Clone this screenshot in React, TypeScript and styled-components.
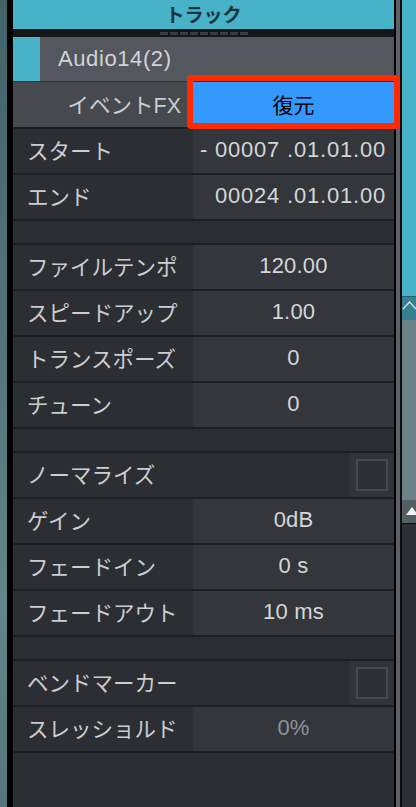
import React from "react";
import styled, { createGlobalStyle } from "styled-components";

// COLOURS

const C = {
  teal: "#48b2c8",
  labelBg: "#2b2e32",
  valueBg: "#33363a",
  divider: "#1c1e21",
  text: "#cbcdd0",
  value: "#d4d6d8",
  dim: "#8d949b",
};

const GlobalStyle = createGlobalStyle`
  html, body {
    margin: 0;
    padding: 0;
    background: ${C.labelBg};
  }
  body {
    font-family: "Liberation Sans", "Noto Sans CJK JP", sans-serif;
    -webkit-font-smoothing: antialiased;
  }
`;

// LAYOUT

const Page = styled.div`
  display: flex;
  height: 807px;
  overflow: hidden;
`;

const LeftEdge = styled.div`
  width: 7px;
  flex: 0 0 7px;
  background: linear-gradient(180deg, #42636a 0%, #557579 45%, #62868a 75%, #557579 100%);
`;

const Panel = styled.div`
  width: 381px;
  flex: 0 0 381px;
  border-left: 6px solid #000;
  border-right: 2px solid #000;
  background: ${C.labelBg};
  display: flex;
  flex-direction: column;
`;

const Gutter = styled.div`
  width: 4px;
  flex: 0 0 4px;
  background: #5b6166;
  border-right: 2px solid #0c0d0e;
`;

const RightStrip = styled.div`
  flex: 1;
  display: flex;
  flex-direction: column;
  background: #2c3034;
`;

const StripPart = styled.div<{ $h: number; $bg: string }>`
  height: ${(p) => p.$h}px;
  flex: 0 0 ${(p) => p.$h}px;
  background: ${(p) => p.$bg};
  overflow: hidden;
`;

// HEADER SECTION

const Header = styled.div`
  height: 29px;
  padding-bottom: 3px;
  box-sizing: border-box;
  background: ${C.teal};
  display: flex;
  align-items: center;
  justify-content: center;
  font-size: 19px;
  font-weight: bold;
  color: #17343e;
`;

const Grip = styled.div`
  height: 8px;
  background: #141618;
  display: flex;
  justify-content: center;
  align-items: center;
  gap: 2px;
`;

const GripDash = styled.span`
  width: 8px;
  height: 3px;
  background: #3a3e44;
`;

const NameRow = styled.div`
  height: 44px;
  display: flex;
  background: #54575d;
  border-bottom: 1px solid #2e3135;
`;

const ColorChip = styled.div`
  width: 27px;
  background: ${C.teal};
`;

const TrackName = styled.div`
  display: flex;
  align-items: center;
  padding-left: 18px;
  font-size: 22px;
  letter-spacing: 0.6px;
  color: #d2d4d6;
`;

const FxRow = styled.div`
  height: 45px;
  display: flex;
  background: #46494e;
`;

const FxLabel = styled.div`
  width: 180px;
  padding: 0 12px 3px 0;
  box-sizing: border-box;
  display: flex;
  align-items: center;
  justify-content: flex-end;
  font-size: 21.5px;
  color: ${C.text};
`;

const RestoreButton = styled.div`
  position: relative;
  flex: 1;
  padding-bottom: 2px;
  background: #3399ff;
  display: flex;
  align-items: center;
  justify-content: center;
  font-size: 21px;
  color: #000;
`;

const Highlight = styled.div`
  position: absolute;
  top: -7px;
  left: -6px;
  right: -6px;
  bottom: -2px;
  border: 6px solid #ff2a00;
  border-radius: 4px;
  z-index: 2;
  pointer-events: none;
`;

// LIST SECTION

const List = styled.div`
  display: flex;
  flex-direction: column;
  gap: 2px;
  padding: 2px 0;
  background: ${C.divider};
`;

const Row = styled.div`
  height: 44px;
  display: flex;
  background: ${C.labelBg};
`;

const Spacer = styled.div`
  height: 22px;
  background: ${C.labelBg};
`;

const Label = styled.div<{ $wide?: boolean }>`
  flex: ${(p) => (p.$wide ? "1" : "0 0 180px")};
  padding: 0 0 4px 14px;
  box-sizing: border-box;
  display: flex;
  align-items: center;
  font-size: 21.5px;
  color: ${C.text};
  white-space: nowrap;
`;

const Value = styled.div<{ $right?: boolean; $dim?: boolean }>`
  flex: 1;
  background: ${C.valueBg};
  display: flex;
  align-items: center;
  justify-content: ${(p) => (p.$right ? "flex-end" : "center")};
  padding-right: ${(p) => (p.$right ? "8px" : "0")};
  padding-bottom: 2px;
  font-size: 22px;
  letter-spacing: ${(p) => (p.$right ? "0.8px" : "0.2px")};
  color: ${(p) => (p.$dim ? C.dim : C.value)};
  white-space: nowrap;
`;

const CheckCell = styled.div`
  width: 44px;
  background: #303337;
  display: flex;
  align-items: center;
  justify-content: center;
`;

const CheckBox = styled.div`
  width: 28px;
  height: 28px;
  border: 2px solid #46494e;
  background: #2c2f33;
`;

type Item =
  | { kind: "spacer" }
  | { kind: "value"; label: string; value: string; right?: boolean; dim?: boolean }
  | { kind: "check"; label: string };

const items: Item[] = [
  { kind: "value", label: "スタート", value: "- 00007 .01.01.00", right: true },
  { kind: "value", label: "エンド", value: "00024 .01.01.00", right: true },
  { kind: "spacer" },
  { kind: "value", label: "ファイルテンポ", value: "120.00" },
  { kind: "value", label: "スピードアップ", value: "1.00" },
  { kind: "value", label: "トランスポーズ", value: "0" },
  { kind: "value", label: "チューン", value: "0" },
  { kind: "spacer" },
  { kind: "check", label: "ノーマライズ" },
  { kind: "value", label: "ゲイン", value: "0dB" },
  { kind: "value", label: "フェードイン", value: "0 s" },
  { kind: "value", label: "フェードアウト", value: "10 ms" },
  { kind: "spacer" },
  { kind: "check", label: "ベンドマーカー" },
  { kind: "value", label: "スレッショルド", value: "0%", dim: true },
];

export default function App() {
  return (
    <Page>
      <GlobalStyle />
      <LeftEdge />
      <Panel>
        <Header>トラック</Header>
        <Grip>
          {Array.from({ length: 9 }).map((_, i) => (
            <GripDash key={i} />
          ))}
        </Grip>
        <NameRow>
          <ColorChip />
          <TrackName>Audio14(2)</TrackName>
        </NameRow>
        <FxRow>
          <FxLabel>イベントFX</FxLabel>
          <RestoreButton>
            復元
            <Highlight />
          </RestoreButton>
        </FxRow>
        <List>
          {items.map((it, i) => {
            if (it.kind === "spacer") return <Spacer key={i} />;
            if (it.kind === "check")
              return (
                <Row key={i}>
                  <Label $wide>{it.label}</Label>
                  <CheckCell>
                    <CheckBox />
                  </CheckCell>
                </Row>
              );
            return (
              <Row key={i}>
                <Label>{it.label}</Label>
                <Value $right={it.right} $dim={it.dim}>
                  {it.value}
                </Value>
              </Row>
            );
          })}
        </List>
      </Panel>
      <Gutter />
      <RightStrip>
        <StripPart $h={296} $bg={C.teal} />
        <StripPart $h={1} $bg="#25606d" />
        <StripPart $h={23} $bg="#357f8f">
          <svg width="14" height="23" viewBox="0 0 14 23">
            <polyline points="1,12 7.5,5 14,12" fill="none" stroke="#cfe2e7" strokeWidth="1.3" />
          </svg>
        </StripPart>
        <StripPart $h={180} $bg="#6b8388" />
        <StripPart $h={23} $bg="#535e64">
          <svg width="14" height="23" viewBox="0 0 14 23">
            <polygon points="4,15 10,7 16,15" fill="#f2f4f5" />
          </svg>
        </StripPart>
        <StripPart $h={1} $bg="#0c0d0e" />
      </RightStrip>
    </Page>
  );
}
